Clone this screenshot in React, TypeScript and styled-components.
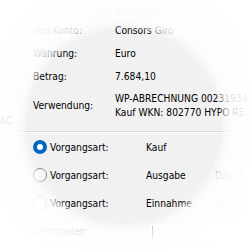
import React from 'react';
import styled, { createGlobalStyle } from 'styled-components';

const GlobalStyle = createGlobalStyle`
  html, body {
    margin: 0;
    padding: 0;
    background: #ffffff;
    overflow: hidden;
  }
  * {
    box-sizing: border-box;
  }
`;

const Stage = styled.div`
  position: relative;
  width: 250px;
  height: 250px;
  overflow: hidden;
  background: #f1f1f1;
  font-family: 'DejaVu Sans Condensed', 'DejaVu Sans', sans-serif;
  font-stretch: condensed;
  font-size: 10.2px;
  color: #000;
`;

const Header = styled.div`
  height: 18px;
  padding-left: 15px;
  font-family: 'Open Sans', 'Liberation Sans', sans-serif;
  font-stretch: normal;
  font-size: 15px;
  line-height: 18px;
  color: #c8c8c8;
  white-space: nowrap;
`;

const InfoGrid = styled.div`
  margin-top: 1px;
  display: grid;
  grid-template-columns: 33px 82px 1fr;
  white-space: nowrap;
`;

const Cell = styled.div<{ $top?: boolean }>`
  height: ${(p) => (p.$top ? 'auto' : '23px')};
  display: flex;
  flex-direction: column;
  justify-content: center;
  line-height: 14px;
  padding: ${(p) => (p.$top ? '4px 0 8px' : '0')};
  overflow: hidden;
`;

const GutterNote = styled.div`
  align-self: end;
  line-height: 14px;
  color: #222;
  overflow: hidden;
`;

const Muted = styled.span`
  color: #666;
`;

const Divider = styled.div`
  margin-top: 3px;
  height: 2px;
  border-top: 1px solid #dadada;
  border-bottom: 1px solid #fbfbfb;
`;

const OptionList = styled.div`
  display: grid;
  grid-template-columns: 33px 113px 69px 1fr;
  grid-auto-rows: 28px;
  white-space: nowrap;
`;

const OptionLabel = styled.label`
  grid-column: 2;
  display: flex;
  align-items: center;
  margin-left: -1px;
  gap: 2px;
`;

const Radio = styled.span<{ $checked?: boolean }>`
  width: 14px;
  height: 14px;
  border-radius: 50%;
  flex: none;
  margin-left: 1px;
  margin-right: 1px;
  background: ${(p) => (p.$checked ? '#0067c0' : '#f7f7f7')};
  border: ${(p) => (p.$checked ? 'none' : '1px solid #8a8a8a')};
  display: flex;
  align-items: center;
  justify-content: center;
  &::after {
    content: '';
    display: ${(p) => (p.$checked ? 'block' : 'none')};
    width: 6px;
    height: 6px;
    border-radius: 50%;
    background: #fff;
  }
`;

const PlainLabel = styled.div`
  grid-column: 2;
  display: flex;
  align-items: center;
`;

const Value = styled.div`
  display: flex;
  align-items: center;
`;

const Hint = styled.div`
  display: flex;
  align-items: center;
  color: #777;
`;

const TextBox = styled.div`
  grid-column: 3 / span 2;
  margin: 6px 0 3px 2px;
  background: #fbfbfb;
  border: 1px solid #e2e2e2;
  border-bottom: 1px solid #c6d7ec;
  border-radius: 3px 3px 0 0;
  display: flex;
  align-items: center;
  padding-left: 3px;
  &::before {
    content: '';
    width: 1px;
    height: 13px;
    background: #333;
  }
`;

const Lens = styled.div`
  position: absolute;
  inset: 0;
  pointer-events: none;
  background: radial-gradient(
    circle at 124px 126px,
    rgba(255, 255, 255, 0) 0,
    rgba(255, 255, 255, 0) 96px,
    rgba(255, 255, 255, 0.5) 101px,
    rgba(255, 255, 255, 0.8) 106px,
    rgba(255, 255, 255, 0.9) 116px,
    rgba(255, 255, 255, 0.97) 132px,
    #ffffff 155px
  );
`;

const options = [
  { value: 'Kauf', hint: '', checked: true },
  { value: 'Ausgabe', hint: 'Das W', checked: false },
  { value: 'Einnahme', hint: 'Ste', checked: false },
];

export default function App() {
  return (
    <>
      <GlobalStyle />
      <Stage>
        <Header>Zuordnung zu einem Wertpapier</Header>
        <InfoGrid>
          <div />
          <Cell>Von Konto:</Cell>
          <Cell>
            <span>
              Consors <Muted>Giro</Muted>
            </span>
          </Cell>
          <div />
          <Cell>Währung:</Cell>
          <Cell>Euro</Cell>
          <div />
          <Cell>Betrag:</Cell>
          <Cell>7.684,10</Cell>
          <GutterNote>AC</GutterNote>
          <Cell $top>
            <span>Verwendung:</span>
          </Cell>
          <Cell $top>
            <span>WP-ABRECHNUNG 00231934</span>
            <span>Kauf WKN: 802770 HYPO RE</span>
          </Cell>
        </InfoGrid>
        <Divider />
        <OptionList>
          {options.map((o) => (
            <React.Fragment key={o.value}>
              <OptionLabel>
                <Radio $checked={o.checked} />
                Vorgangsart:
              </OptionLabel>
              <Value>{o.value}</Value>
              <Hint>{o.hint}</Hint>
            </React.Fragment>
          ))}
          <PlainLabel>Wertpapier:</PlainLabel>
          <TextBox />
        </OptionList>
        <Lens />
      </Stage>
    </>
  );
}
